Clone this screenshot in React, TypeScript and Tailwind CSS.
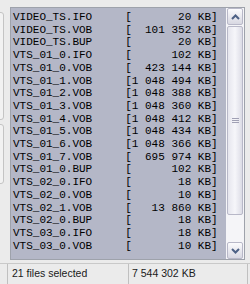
import React from 'react';

const FILES: [string, string][] = [
  ['VIDEO_TS.IFO', '20 KB'],
  ['VIDEO_TS.VOB', '101 352 KB'],
  ['VIDEO_TS.BUP', '20 KB'],
  ['VTS_01_0.IFO', '102 KB'],
  ['VTS_01_0.VOB', '423 144 KB'],
  ['VTS_01_1.VOB', '1 048 494 KB'],
  ['VTS_01_2.VOB', '1 048 388 KB'],
  ['VTS_01_3.VOB', '1 048 360 KB'],
  ['VTS_01_4.VOB', '1 048 412 KB'],
  ['VTS_01_5.VOB', '1 048 434 KB'],
  ['VTS_01_6.VOB', '1 048 366 KB'],
  ['VTS_01_7.VOB', '695 974 KB'],
  ['VTS_01_0.BUP', '102 KB'],
  ['VTS_02_0.IFO', '18 KB'],
  ['VTS_02_0.VOB', '10 KB'],
  ['VTS_02_1.VOB', '13 860 KB'],
  ['VTS_02_0.BUP', '18 KB'],
  ['VTS_03_0.IFO', '18 KB'],
  ['VTS_03_0.VOB', '10 KB'],
];

function Arrow({ up }: { up?: boolean }) {
  return (
    <svg width="9" height="6" viewBox="0 0 9 6">
      <path
        d={up ? 'M1 5 L4.5 1.5 L8 5' : 'M1 1 L4.5 4.5 L8 1'}
        fill="none"
        stroke="#4d6185"
        strokeWidth="2"
      />
    </svg>
  );
}

function ScrollButton({ up }: { up?: boolean }) {
  return (
    <div className="flex h-[17px] w-[16px] items-center justify-center rounded-[2px] border border-[#b8b8c8] bg-gradient-to-b from-[#fbfbfd] to-[#d8d8e2]">
      <Arrow up={up} />
    </div>
  );
}

export default function App() {
  return (
    <div className="flex h-[284px] w-[250px] flex-col overflow-hidden bg-[#ebebeb]">
      <div className="flex h-[263px] pt-[7px] pb-[3px] pr-[5px]">
        {/* partly hidden panel on the left */}
        <div className="flex w-[10px] flex-col gap-[4px] pt-[5px]">
          <div className="-ml-[6px] h-[108px] w-[10px] rounded-[3px] border border-[#c4c4c4] bg-[#f2f2f2]" />
          <div className="-ml-[6px] h-[60px] w-[10px] rounded-[3px] border border-[#c4c4c4] bg-[#f2f2f2]" />
        </div>

        <div className="flex flex-1 border border-[#9ea2ab] bg-white">
          <div
            className="flex-1 overflow-hidden whitespace-pre bg-[#b4b7c7] pl-[2px] pt-[3px] text-[11px] leading-[12.7px] text-black"
            style={{ fontFamily: '"Liberation Mono", monospace' }}
          >
            {FILES.map(([name, size]) => (
              <div key={name}>{`${name.padEnd(17)}[${size.padStart(12)}]`}</div>
            ))}
          </div>

          <div className="flex w-[18px] flex-col bg-[#f5f5f8] pl-[1px]">
            <ScrollButton up />
            <div className="relative mt-[1px] flex h-[189px] w-[16px] items-center justify-center rounded-[2px] border border-[#b8b8c8] bg-gradient-to-r from-[#e6e6ee] via-[#f6f6fa] to-[#dcdce6]">
              <div className="flex flex-col gap-[1px]">
                <div className="h-px w-[7px] bg-[#a0a0b4]" />
                <div className="h-px w-[7px] bg-[#a0a0b4]" />
                <div className="h-px w-[7px] bg-[#a0a0b4]" />
              </div>
            </div>
            <div className="flex-1" />
            <ScrollButton />
          </div>
        </div>
      </div>

      <div
        className="flex h-[21px] border-t border-[#c9c9c9] bg-[#ebebeb] text-[10.5px] text-[#1a1a1a]"
        style={{ fontFamily: '"Liberation Sans", Arial, sans-serif' }}
      >
        <div className="ml-[7px] flex w-[121px] items-center border-l border-[#c0c0c0] pl-[4px]">
          21 files selected
        </div>
        <div className="mr-[2px] flex flex-1 items-center border-l border-r border-[#c0c0c0] pl-[3px]">
          7 544 302 KB
        </div>
      </div>
    </div>
  );
}
